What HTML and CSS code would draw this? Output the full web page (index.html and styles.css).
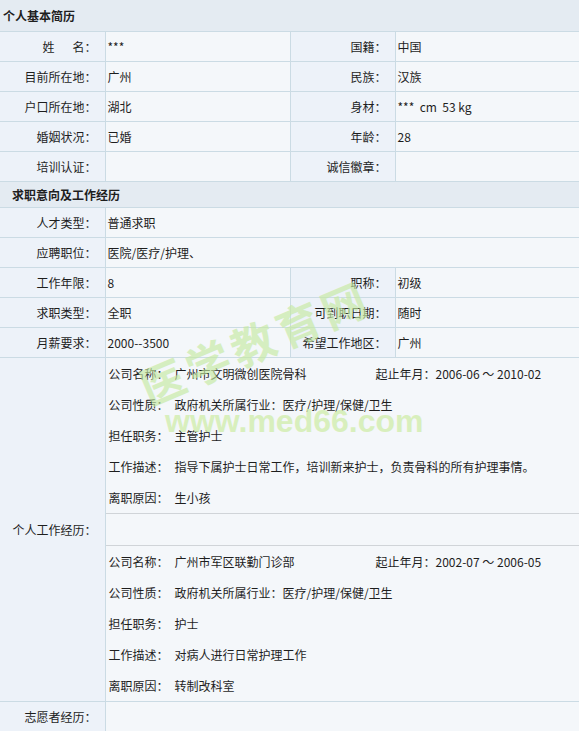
FILE: index.html
```html
<!DOCTYPE html>
<html lang="zh-CN">
  <head>
    <meta charset="UTF-8" />
    <title>个人简历</title>
    <link rel="stylesheet" href="styles.css">
  </head>
  <body>
    <div class="page">
      <table class="resume">
        <colgroup>
          <col class="c1" /><col class="c2" /><col class="c3" /><col class="c4" />
        </colgroup>
        <tr class="sec first"><th colspan="4">个人基本简历</th></tr>
        <tr>
          <td class="k">姓&emsp;&ensp;名：</td><td class="v">***</td>
          <td class="k">国籍：</td><td class="v">中国</td>
        </tr>
        <tr>
          <td class="k">目前所在地：</td><td class="v">广州</td>
          <td class="k">民族：</td><td class="v">汉族</td>
        </tr>
        <tr>
          <td class="k">户口所在地：</td><td class="v">湖北</td>
          <td class="k">身材：</td><td class="v pre">***  cm  53 kg</td>
        </tr>
        <tr>
          <td class="k">婚姻状况：</td><td class="v">已婚</td>
          <td class="k">年龄：</td><td class="v">28</td>
        </tr>
        <tr>
          <td class="k">培训认证：</td><td class="v"></td>
          <td class="k">诚信徽章：</td><td class="v"></td>
        </tr>
        <tr class="sec second"><th colspan="4">求职意向及工作经历</th></tr>
        <tr>
          <td class="k">人才类型：</td><td class="v" colspan="3">普通求职</td>
        </tr>
        <tr>
          <td class="k">应聘职位：</td><td class="v" colspan="3">医院/医疗/护理、</td>
        </tr>
        <tr>
          <td class="k">工作年限：</td><td class="v">8</td>
          <td class="k">职称：</td><td class="v">初级</td>
        </tr>
        <tr>
          <td class="k">求职类型：</td><td class="v">全职</td>
          <td class="k">可到职日期：</td><td class="v">随时</td>
        </tr>
        <tr>
          <td class="k">月薪要求：</td><td class="v">2000--3500</td>
          <td class="k">希望工作地区：</td><td class="v">广州</td>
        </tr>
        <tr>
          <td class="k">个人工作经历：</td>
          <td class="v jobs" colspan="3">
            <div class="job">
              <div class="line">
                <span class="lk">公司名称：</span><span class="name">广州市文明微创医院骨科</span>
                <span>起止年月：</span><span class="date">2006-06 ～ 2010-02</span>
              </div>
              <div class="line"><span class="lk">公司性质：</span><span>政府机关所属行业：医疗/护理/保健/卫生</span></div>
              <div class="line"><span class="lk">担任职务：</span><span>主管护士</span></div>
              <div class="line"><span class="lk">工作描述：</span><span>指导下属护士日常工作，培训新来护士，负责骨科的所有护理事情。</span></div>
              <div class="line"><span class="lk">离职原因：</span><span>生小孩</span></div>
            </div>
            <div class="gap"></div>
            <div class="job">
              <div class="line">
                <span class="lk">公司名称：</span><span class="name">广州市军区联勤门诊部</span>
                <span>起止年月：</span><span class="date">2002-07 ～ 2006-05</span>
              </div>
              <div class="line"><span class="lk">公司性质：</span><span>政府机关所属行业：医疗/护理/保健/卫生</span></div>
              <div class="line"><span class="lk">担任职务：</span><span>护士</span></div>
              <div class="line"><span class="lk">工作描述：</span><span>对病人进行日常护理工作</span></div>
              <div class="line"><span class="lk">离职原因：</span><span>转制改科室</span></div>
            </div>
          </td>
        </tr>
        <tr>
          <td class="k">志愿者经历：</td><td class="v" colspan="3"></td>
        </tr>
      </table>
      <!-- 水印 -->
      <div class="mark-cn">医学教育网</div>
      <div class="mark-url">www.med66.com</div>
    </div>
  </body>
</html>
```

FILE: styles.css
```css
body {
  margin: 0;
  font-family: "Noto Sans CJK SC", "Liberation Sans", sans-serif;
  font-size: 12px;
  color: #1e1e1e;
  background: #f4f7fa;
}
.page {
  position: relative;
  width: 579px;
  overflow: hidden;
}
.resume {
  width: 579px;
  border-collapse: collapse;
  table-layout: fixed;
}
.c1 {
  width: 105px;
}
.c2 {
  width: 185px;
}
.c3 {
  width: 105px;
}
.c4 {
  width: 184px;
}
.resume td {
  height: 29px;
  padding: 0;
  border: 1px solid #cbdbe4;
  line-height: 16px;
}
.resume tr td:first-child {
  border-left: none;
}
.sec th {
  text-align: left;
  font-weight: bold;
  font-size: 12px;
  background: #e4ebf2;
  border: 1px solid #cbdbe4;
  border-left: none;
  padding: 0;
}
.sec.first th {
  height: 31px;
  border-top: none;
  padding-left: 3px;
}
.sec.second th {
  height: 25px;
  padding-left: 12px;
}
.k {
  background: #edf2f9;
  text-align: right;
  padding-right: 8px !important;
}
.v {
  background: #f4f7fa;
  padding-left: 2px !important;
}
.pre {
  white-space: pre;
}
.jobs {
  padding: 0 !important;
}
.job {
  padding-left: 3px;
}
.line {
  display: flex;
  align-items: center;
  height: 31px;
  white-space: nowrap;
}
.lk {
  width: 66px;
}
.name {
  width: 201px;
}
.date {
  white-space: pre;
}
.gap {
  height: 31px;
  border-top: 1px solid #d0d4d8;
  border-bottom: 1px solid #d0d4d8;
}
.mark-cn {
  position: absolute;
  left: 132px;
  top: 316px;
  width: 250px;
  line-height: 48px;
  font-size: 44px;
  font-weight: bold;
  letter-spacing: 5px;
  color: #c6eaa2;
  opacity: 0.65;
  transform: rotate(-23deg);
  pointer-events: none;
}
.mark-url {
  position: absolute;
  left: 165px;
  top: 405px;
  line-height: 32px;
  font-family: "Liberation Sans", sans-serif;
  font-size: 32px;
  font-weight: bold;
  color: #d2eeae;
  opacity: 0.8;
  pointer-events: none;
}
```
